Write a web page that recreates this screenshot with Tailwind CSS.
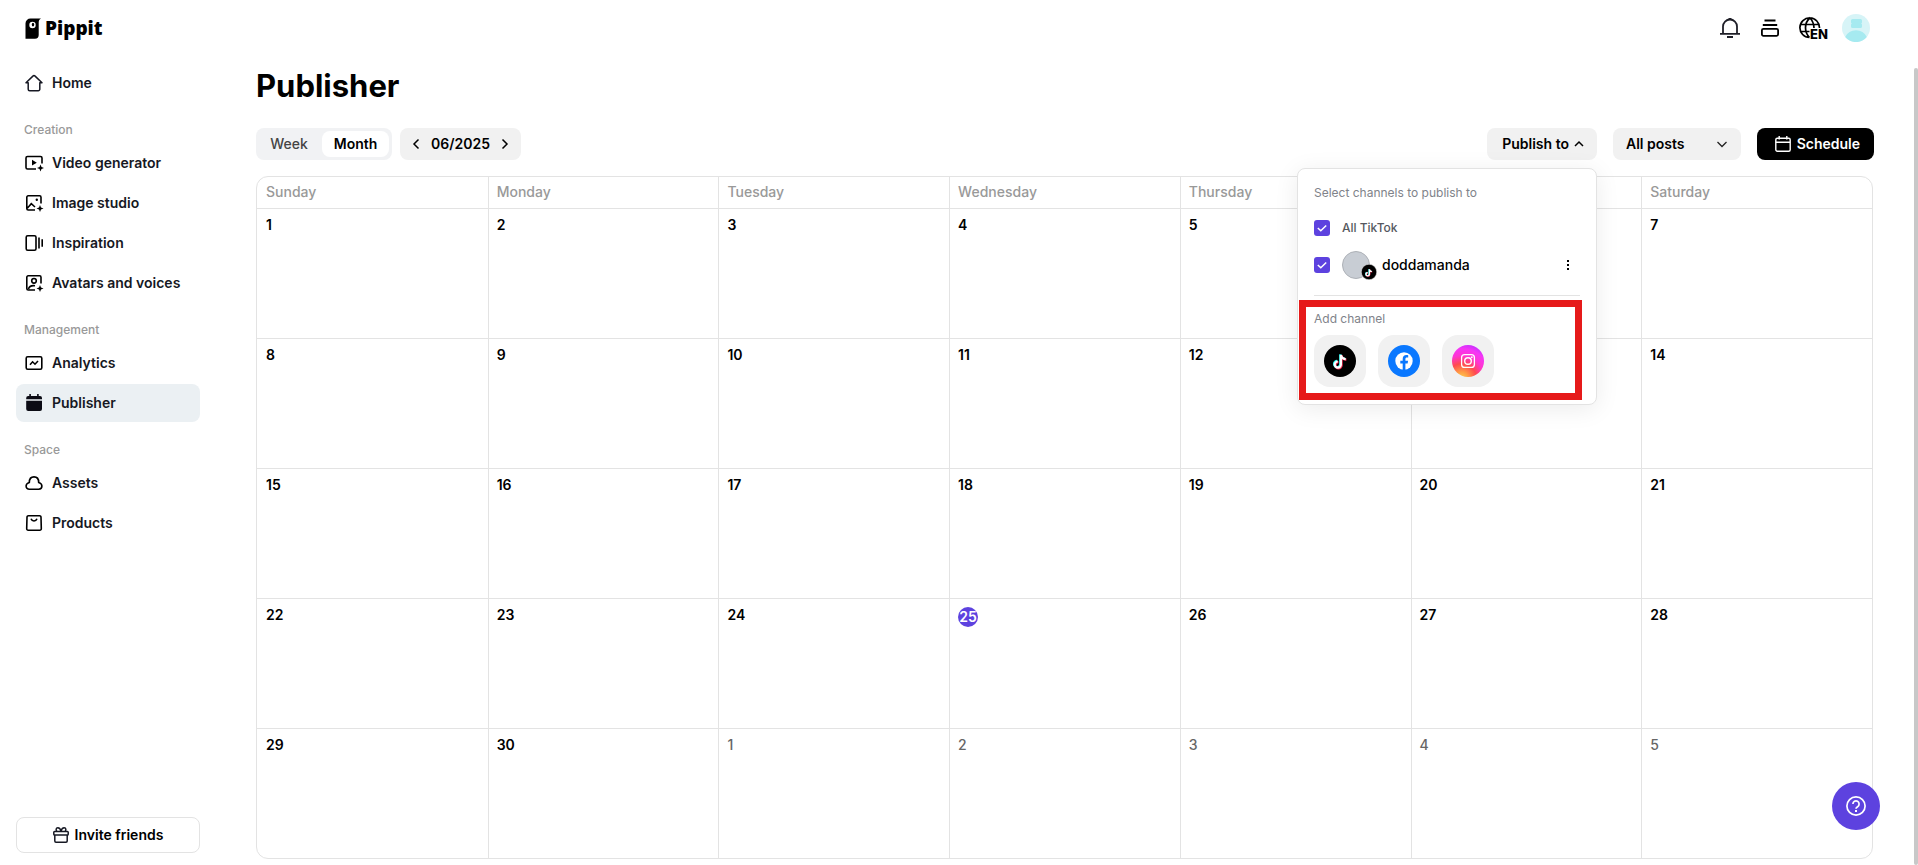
<!DOCTYPE html>
<html lang="en">
<head>
    <meta charset="UTF-8">
    <meta name="viewport" content="width=device-width, initial-scale=1.0">
    <title>Publisher - Pippit</title>
    <script src="https://cdn.jsdelivr.net/npm/@tailwindcss/browser@4"></script>
</head>
<body class="bg-white text-black font-['Inter','Liberation_Sans',sans-serif] text-sm h-screen overflow-hidden flex flex-col">
    <header class="h-14 shrink-0 flex items-center justify-between pl-6 pr-12">
        <a href="#" class="flex items-center gap-1">
            <svg class="w-[17px] h-[21px]" viewBox="0 0 17 21">
                <path fill="#000" d="M1.500 5.500A5 5 0 0 1 6.500.500H17c-1.500.8-2.300 2-2.300 4V17a3.700 3.700 0 0 1-3.700 3.700H1.500z"/>
                <circle cx="8.500" cy="7" r="3.200" fill="#fff"/>
                <ellipse cx="9" cy="6.600" rx="1.200" ry="1.900" fill="#000"/>
            </svg>
            <span class="font-['Open_Sans','Liberation_Sans',sans-serif] font-extrabold text-[19px] leading-6">Pippit</span>
        </a>
        <div class="flex items-center">
            <button aria-label="Notifications" class="w-5 mr-5">
                <svg class="size-5" viewBox="0 0 20 20" fill="none" stroke="#1f1f28" stroke-width="1.800">
                    <path d="M0 15.800h20M3 15.800V8.500a7 7 0 0 1 14 0v7.300M8.500.900h3M7 19h6"/>
                </svg>
            </button>
            <button aria-label="Tasks" class="w-5 mr-[19px]">
                <svg class="size-5" viewBox="0 0 20 20" fill="none" stroke="#000" stroke-width="1.800">
                    <path d="M4.500 2.500h11M2.800 7h14.400"/>
                    <rect x="1.900" y="10.800" width="16.200" height="7" rx="1.500"/>
                </svg>
            </button>
            <button aria-label="Language" class="mr-[13px]">
                <svg class="w-[30px] h-6" viewBox="0 0 30 24" fill="none" stroke="#000" stroke-width="1.700">
                    <path d="M10.500 21.500A9.800 9.800 0 1 1 20.500 12M1.500 8.500h18.500M1.500 15.500h9M10.500 21.500c-2-2-4-5.500-4-9.700S8.500 4 10.800 2c2.600 2.400 4 5.500 4.200 10"/>
                    <text x="11" y="22.500" font-size="13" font-weight="800" fill="#000" stroke="none" font-family="Inter, sans-serif">EN</text>
                </svg>
            </button>
            <button aria-label="Account">
                <svg class="size-7" viewBox="0 0 28 28">
                    <circle cx="14" cy="14" r="14" fill="#d7f4f7"/>
                    <path fill="#a6eaf0" d="M10.500 5h8a1.500 1.500 0 0 1 1.500 1.500v2l-.7 1 .7 1v2a1.500 1.500 0 0 1-1.500 1.500h-8A1.500 1.500 0 0 1 9 12.500v-2l.7-1-.7-1v-2A1.500 1.500 0 0 1 10.500 5zM3.200 23a12 12 0 0 1 21.600 0A14 14 0 0 1 3.200 23z"/>
                </svg>
            </button>
        </div>
    </header>

    <div class="flex flex-1 min-h-0">
        <!-- Sidebar -->
        <aside class="w-[216px] shrink-0 px-4 pt-2 pb-3 flex flex-col justify-between">
            <nav class="flex flex-col gap-0.5 font-semibold text-[#161823]">
                <a href="#" class="flex items-center gap-2 h-[38px] px-2 rounded-lg">
                    <svg class="size-5" viewBox="0 0 20 20" fill="none" stroke="currentColor" stroke-width="1.500" stroke-linejoin="round">
                        <path d="M2 9.800h2.200v6.400A1.500 1.500 0 0 0 5.700 17.700h8.600a1.500 1.500 0 0 0 1.500-1.500V9.800H18l-6.900-6.700a1.600 1.600 0 0 0-2.200 0z"/>
                    </svg>
                    Home
                </a>
                <div class="h-[38px] px-2 pt-4 text-xs leading-5 font-medium text-[#999]">Creation</div>
                <a href="#" class="flex items-center gap-2 h-[38px] px-2 rounded-lg">
                    <svg class="size-5" viewBox="0 0 20 20" fill="none" stroke="#000" stroke-width="1.600">
                        <path d="M18 10.500V5a1.500 1.500 0 0 0-1.500-1.500h-13A1.500 1.500 0 0 0 2 5v9.500A1.500 1.500 0 0 0 3.500 16H12"/>
                        <path fill="#000" stroke="none" d="M8 6.800v5.800l4.800-2.900zM16.500 11.500l1 2.500 2.500 1-2.500 1-1 2.500-1-2.500-2.500-1 2.500-1z"/>
                    </svg>
                    Video generator
                </a>
                <a href="#" class="flex items-center gap-2 h-[38px] px-2 rounded-lg">
                    <svg class="size-5" viewBox="0 0 20 20" fill="none" stroke="#000" stroke-width="1.600">
                        <path d="M17 10.500V4.200A1.400 1.400 0 0 0 15.600 2.800H4.200A1.400 1.400 0 0 0 2.800 4.200v11.400A1.400 1.400 0 0 0 4.200 17H11M3.500 15l3.800-4.300L11 14"/>
                        <circle cx="12.800" cy="6.800" r="1.200" fill="#000" stroke="none"/>
                        <path fill="#000" stroke="none" d="M16 12l1 2.500 2.500 1-2.500 1-1 2.500-1-2.500-2.500-1 2.500-1z"/>
                    </svg>
                    Image studio
                </a>
                <a href="#" class="flex items-center gap-2 h-[38px] px-2 rounded-lg">
                    <svg class="size-5" viewBox="0 0 20 20" fill="none" stroke="#000" stroke-width="1.600">
                        <rect x="2.200" y="2.800" width="9.800" height="14.400" rx="1.500"/>
                        <path d="M15 4.500v11M18.200 6.200v7.600"/>
                    </svg>
                    Inspiration
                </a>
                <a href="#" class="flex items-center gap-2 h-[38px] px-2 rounded-lg">
                    <svg class="size-5" viewBox="0 0 20 20" fill="none" stroke="#000" stroke-width="1.600">
                        <path d="M17 10.500V4.200A1.400 1.400 0 0 0 15.600 2.800H4.200A1.400 1.400 0 0 0 2.800 4.200v11.400A1.400 1.400 0 0 0 4.200 17H11M4.500 16c.6-2.400 2.800-3.800 6.500-3.300"/>
                        <circle cx="10" cy="7.800" r="2.300"/>
                        <path fill="#000" stroke="none" d="M16 12l1 2.500 2.500 1-2.500 1-1 2.500-1-2.500-2.500-1 2.500-1z"/>
                    </svg>
                    Avatars and voices
                </a>
                <div class="h-[38px] px-2 pt-4 text-xs leading-5 font-medium text-[#999]">Management</div>
                <a href="#" class="flex items-center gap-2 h-[38px] px-2 rounded-lg">
                    <svg class="size-5" viewBox="0 0 20 20" fill="none" stroke="#000" stroke-width="1.600">
                        <rect x="2.200" y="3.800" width="15.600" height="12.400" rx="1.500"/>
                        <path d="M6 11.800l2.600-3 2.400 2.400 3-3.200"/>
                    </svg>
                    Analytics
                </a>
                <a href="#" class="flex items-center gap-2 h-[38px] px-2 rounded-lg bg-[#ebf0f3]">
                    <svg class="size-5" viewBox="0 0 20 20">
                        <path fill="#0b0b14" d="M5.300 1h1.600v2h6.200V1h1.600v2h1.300a2 2 0 0 1 2 2v1.300H2.200V5a2 2 0 0 1 2-2h1.100zM2.200 7.800H18V16a2 2 0 0 1-2 2H4.200a2 2 0 0 1-2-2z"/>
                    </svg>
                    Publisher
                </a>
                <div class="h-[38px] px-2 pt-4 text-xs leading-5 font-medium text-[#999]">Space</div>
                <a href="#" class="flex items-center gap-2 h-[38px] px-2 rounded-lg">
                    <svg class="size-5" viewBox="0 0 20 20" fill="none" stroke="#000" stroke-width="1.600">
                        <path d="M5.300 9.500C5.300 6 7 3.900 10 3.900s4.700 2.100 4.700 5.600c2 .6 3.200 1.900 3.200 3.600 0 2-1.400 3.100-3.300 3.100H5.400c-1.900 0-3.300-1.100-3.300-3.100 0-1.700 1.200-3 3.200-3.600z"/>
                    </svg>
                    Assets
                </a>
                <a href="#" class="flex items-center gap-2 h-[38px] px-2 rounded-lg">
                    <svg class="size-5" viewBox="0 0 20 20" fill="none" stroke="#000" stroke-width="1.600">
                        <path d="M4.500 2.800h11A1.400 1.400 0 0 1 17 4.200l.3 11.400a1.500 1.500 0 0 1-1.500 1.600H4.200a1.500 1.500 0 0 1-1.500-1.600L3 4.200a1.400 1.400 0 0 1 1.500-1.400zM7 5.800c.6 1.500 1.700 2.200 3 2.200s2.400-.7 3-2.200"/>
                    </svg>
                    Products
                </a>
            </nav>
            <button class="flex items-center justify-center gap-1.5 h-9 w-[184px] border border-[#e3e3e3] rounded-lg font-semibold">
                <svg class="size-4" viewBox="0 0 16 16" fill="none" stroke="#161823" stroke-width="1.500">
                    <rect x=".8" y="4.500" width="14.400" height="3.500" rx=".8"/>
                    <path d="M1.800 8v6a1.200 1.200 0 0 0 1.200 1.200h10a1.200 1.200 0 0 0 1.200-1.200V8M8 4.500C7.500 2 6.200.8 4.800.8 3 .8 2.500 3 4 4.500M8 4.500C8.500 2 9.800.8 11.200.8 13 .8 13.500 3 12 4.500"/>
                </svg>
                Invite friends
            </button>
        </aside>

        <!-- Publisher -->
        <main class="flex-1 min-w-0 pl-10 pr-11">
            <h1 class="text-[31px] leading-9 font-bold pt-3 mb-6">Publisher</h1>

            <div class="flex items-center justify-between mb-4">
                <div class="flex gap-2">
                    <div class="flex items-center h-8 p-[3px] pl-0 rounded-lg bg-[#f1f2f4]">
                        <button class="h-[26px] w-[66px] font-medium text-[#444]">Week</button>
                        <button class="h-[26px] w-[67px] rounded-lg bg-white font-semibold">Month</button>
                    </div>
                    <div class="flex items-center justify-between h-8 w-[121px] px-2.5 rounded-lg bg-[#f1f1f1] font-semibold">
                        <button aria-label="Previous month">
                            <svg class="size-3" viewBox="0 0 12 12" fill="none" stroke="#000" stroke-width="1.500"><path d="M8.500 1.500L4 6l4.500 4.500"/></svg>
                        </button>
                        <span>06/2025</span>
                        <button aria-label="Next month">
                            <svg class="size-3" viewBox="0 0 12 12" fill="none" stroke="#000" stroke-width="1.500"><path d="M3.500 1.500L8 6l-4.500 4.500"/></svg>
                        </button>
                    </div>
                </div>

                <div class="flex gap-4 font-semibold">
                    <div class="relative">
                        <button aria-expanded="true" class="flex items-center justify-end gap-1 h-8 w-[110px] pr-3 rounded-lg bg-[#f1f1f1]">
                            Publish to
                            <svg class="size-3" viewBox="0 0 12 12" fill="none" stroke="#000" stroke-width="1.500"><path d="M2 8l4-4 4 4"/></svg>
                        </button>

                        <!-- Channel menu -->
                        <div class="absolute z-10 right-0 top-10 w-[300px] px-4 pt-4 pb-4 bg-white border border-[#e3e3e3] rounded-lg shadow-[0_4px_24px_rgba(0,0,0,0.08)] font-normal">
                            <p class="text-xs leading-4 text-[#80838a]">Select channels to publish to</p>
                            <label class="flex items-center gap-3 h-4 mt-[19px] text-xs font-medium text-[#55585e]">
                                <span class="grid size-4">
                                    <input type="checkbox" checked class="col-start-1 row-start-1 size-4 appearance-none rounded-[3px] bg-[#5d42df]">
                                    <svg class="col-start-1 row-start-1 size-4" viewBox="0 0 16 16" fill="none" stroke="#fff" stroke-width="1.500"><path d="M3.800 8l3 2.800 5.400-5.300"/></svg>
                                </span>
                                All TikTok
                            </label>
                            <div class="flex items-center justify-between h-7 mt-[15px] pr-1">
                                <label class="flex items-center gap-3 font-medium">
                                    <span class="grid size-4">
                                        <input type="checkbox" checked class="col-start-1 row-start-1 size-4 appearance-none rounded-[3px] bg-[#5d42df]">
                                        <svg class="col-start-1 row-start-1 size-4" viewBox="0 0 16 16" fill="none" stroke="#fff" stroke-width="1.500"><path d="M3.800 8l3 2.800 5.400-5.300"/></svg>
                                    </span>
                                    <span class="relative size-7 rounded-full bg-[#c8cdd4] border border-[#adb1b7]">
                                        <svg class="absolute -right-2 -bottom-0.5 size-4" viewBox="0 0 32 32">
                                            <circle cx="16" cy="16" r="15.500" fill="#000" stroke="#fff"/>
                                            <g transform="translate(1 1)" fill="none" stroke-width="2.600">
                                                <path stroke="#25f4ee" d="M15 9v10a3.400 3.400 0 1 1-3.400-3.400M15 9c.4 2.800 2.200 4.500 5 4.700"/>
                                                <path stroke="#fe2c55" d="M16.500 10v10a3.400 3.400 0 1 1-3.400-3.400M16.500 10c.4 2.800 2.200 4.500 5 4.700"/>
                                                <path stroke="#fff" d="M15.800 9.500v10a3.400 3.400 0 1 1-3.400-3.400M15.800 9.500c.4 2.800 2.200 4.500 5 4.700"/>
                                            </g>
                                        </svg>
                                    </span>
                                    doddamanda
                                </label>
                                <button aria-label="Channel options">
                                    <svg class="size-4" viewBox="0 0 16 16"><path d="M7 3h2v2H7zM7 7h2v2H7zM7 11h2v2H7z"/></svg>
                                </button>
                            </div>
                            <hr class="mt-4 border-[#e3e3e3]">
                            <!-- Highlighted area -->
                            <div class="mt-1 -ml-[15px] -mr-px -mb-3 w-[283px] h-[100px] border-[7px] border-[#e61a1a] pl-2 pt-1">
                                <p class="text-xs leading-4 text-[#80838a] mb-2">Add channel</p>
                                <div class="flex gap-3">
                                    <button aria-label="TikTok" class="grid place-items-center size-[52px] rounded-2xl bg-[#f1f1f1]">
                                        <svg class="size-8" viewBox="0 0 32 32">
                                            <circle cx="16" cy="16" r="16" fill="#000"/>
                                            <g fill="none" stroke-width="2.200">
                                                <path stroke="#25f4ee" d="M16.200 9.300v9.700a3.100 3.100 0 1 1-3.100-3.100M16.200 9.300c.4 2.500 2.200 4 4.800 4.200"/>
                                                <path stroke="#fe2c55" d="M17.600 10.500v9.700a3.100 3.100 0 1 1-3.100-3.100M17.600 10.500c.4 2.500 2.200 4 4.800 4.200"/>
                                                <path stroke="#fff" d="M16.900 9.900v9.700a3.100 3.100 0 1 1-3.100-3.100M16.900 9.900c.4 2.500 2.200 4 4.800 4.200"/>
                                            </g>
                                        </svg>
                                    </button>
                                    <button aria-label="Facebook" class="grid place-items-center size-[52px] rounded-2xl bg-[#f1f1f1]">
                                        <svg class="size-8" viewBox="0 0 32 32">
                                            <circle cx="16" cy="16" r="16" fill="#0a78ff"/>
                                            <circle cx="16" cy="16" r="8.700" fill="#fff"/>
                                            <path fill="#0a78ff" d="M14.700 25v-6.600h-2.400v-2.700h2.400v-1.800c0-2.600 1.400-3.900 3.700-3.900.7 0 1.300.1 1.800.2v2.300h-1.200c-1.200 0-1.600.6-1.600 1.500v1.700h2.700l-.5 2.700h-2.200V25z"/>
                                        </svg>
                                    </button>
                                    <button aria-label="Instagram" class="grid place-items-center size-[52px] rounded-2xl bg-[#f1f1f1]">
                                        <svg class="size-8" viewBox="0 0 32 32" fill="none">
                                            <defs>
                                                <radialGradient id="ig" cx=".3" cy="1.050" r="1.100">
                                                    <stop offset="0" stop-color="#ffd24d"/>
                                                    <stop offset=".2" stop-color="#ff9a45"/>
                                                    <stop offset=".42" stop-color="#ff4a50"/>
                                                    <stop offset=".65" stop-color="#ff35d0"/>
                                                    <stop offset=".85" stop-color="#f535f5"/>
                                                    <stop offset="1" stop-color="#c530ff"/>
                                                </radialGradient>
                                            </defs>
                                            <circle cx="16" cy="16" r="16" fill="url(#ig)"/>
                                            <rect x="9.600" y="9.600" width="12.800" height="12.800" rx="3" stroke="#fff" stroke-width="1.300"/>
                                            <circle cx="16" cy="16" r="3.300" stroke="#fff" stroke-width="1.400"/>
                                            <circle cx="19.800" cy="12.200" r=".9" fill="#fff"/>
                                        </svg>
                                    </button>
                                </div>
                            </div>
                        </div>
                    </div>

                    <div class="grid items-center h-8 w-32 rounded-lg bg-[#f1f1f1]">
                        <select aria-label="Filter posts" class="col-start-1 row-start-1 h-8 pl-[13px] appearance-none bg-transparent">
                            <option>All posts</option>
                        </select>
                        <svg class="col-start-1 row-start-1 justify-self-end mr-[13px] size-3 pointer-events-none" viewBox="0 0 12 12" fill="none" stroke="#222" stroke-width="1.300"><path d="M1.500 4L6 8.500 10.500 4"/></svg>
                    </div>

                    <button class="flex items-center justify-end gap-1.5 h-8 w-[117px] pr-3.5 rounded-lg bg-black text-white font-semibold">
                        <svg class="size-4" viewBox="0 0 16 16" fill="none" stroke="#fff" stroke-width="1.400">
                            <rect x=".8" y="2.200" width="14.400" height="13" rx="1.500"/>
                            <path d="M.8 6.200h14.400M4.200 0v3.500M11.800 0v3.500"/>
                        </svg>
                        Schedule
                    </button>
                </div>
            </div>

            <div class="mr-px border border-[#e3e3e3] rounded-xl overflow-hidden">
                <table class="w-full table-fixed border-separate border-spacing-0 text-left">
                    <thead>
                        <tr class="h-8 text-[#999]">
                            <th class="pl-[9px] pb-0.5 font-medium border-b border-[#e3e3e3]">Sunday</th>
                            <th class="pl-2 pb-0.5 font-medium border-b border-l border-[#e3e3e3]">Monday</th>
                            <th class="pl-2 pb-0.5 font-medium border-b border-l border-[#e3e3e3]">Tuesday</th>
                            <th class="pl-2 pb-0.5 font-medium border-b border-l border-[#e3e3e3]">Wednesday</th>
                            <th class="pl-2 pb-0.5 font-medium border-b border-l border-[#e3e3e3]">Thursday</th>
                            <th class="pl-2 pb-0.5 font-medium border-b border-l border-[#e3e3e3]">Friday</th>
                            <th class="pl-2 pb-0.5 font-medium border-b border-l border-[#e3e3e3]">Saturday</th>
                        </tr>
                    </thead>
                    <tbody id="days"></tbody>
                </table>
            </div>
        </main>
    </div>

    <button aria-label="Help" class="fixed z-20 right-[38px] bottom-[35px] grid place-items-center size-12 rounded-full bg-[#5d42df]">
        <svg class="size-5" viewBox="0 0 20 20" fill="none" stroke="#fff" stroke-width="1.700">
            <circle cx="10" cy="10" r="9.100"/>
            <path d="M6.900 8a3.100 3.100 0 1 1 4.700 2.700c-1 .6-1.600 1-1.600 2.100"/>
            <path d="M10 14v1.900" stroke-width="2"/>
        </svg>
    </button>
    <div class="fixed right-0 top-[68px] bottom-0 w-1 rounded-sm bg-[#c8c8c8]"></div>

    <script>
        const days = document.getElementById('days');
        const today = 25;
        const daysInMonth = 30;

        for (let week = 0; week < 5; week++) {
            const row = document.createElement('tr');
            row.className = week < 4 ? 'h-[130px] align-top' : 'h-[129px] align-top';

            for (let d = 1; d <= 7; d++) {
                const n = week * 7 + d;
                const cell = document.createElement('td');
                const label = document.createElement('span');

                cell.className = d > 1 ? 'pl-2 pt-1.5 border-l border-[#e3e3e3]' : 'pl-[9px] pt-1.5 border-[#e3e3e3]';
                if (week < 4) cell.classList.add('border-b');

                // Days after the 30th belong to the next month
                label.textContent = n > daysInMonth ? n - daysInMonth : n;
                if (n === today) {
                    label.className = 'grid place-items-center size-5 mt-0.5 rounded-full bg-[#5d42df] text-white font-semibold';
                } else if (n > daysInMonth) {
                    label.className = 'block leading-5 font-medium text-[#666]';
                } else {
                    label.className = 'block leading-5 font-semibold';
                }

                cell.appendChild(label);
                row.appendChild(cell);
            }
            days.appendChild(row);
        }
    </script>
</body>
</html>
